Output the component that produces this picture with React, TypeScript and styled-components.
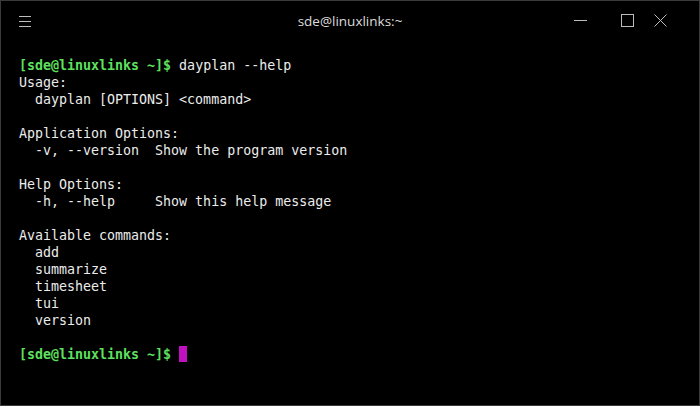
import React from "react";
import styled, { createGlobalStyle } from "styled-components";

const Global = createGlobalStyle`
  html, body { margin: 0; padding: 0; background: #000; }
  body { width: 700px; height: 406px; overflow: hidden; }
`;

const Window = styled.div`
  box-sizing: border-box;
  width: 700px;
  height: 406px;
  background: #000;
  border: 1px solid #3b3b3b;
  display: flex;
  flex-direction: column;
`;

const TitleBar = styled.div`
  height: 39px;
  display: grid;
  grid-template-columns: 160px 1fr 160px;
  align-items: center;
  font-family: "Open Sans", "Noto Sans", sans-serif;
  color: #dcdcdc;
`;

const MenuButton = styled.div`
  padding-left: 17px;
  display: flex;
  align-items: center;
  height: 100%;
`;

const Title = styled.div`
  text-align: center;
  font-size: 13.5px;
  padding-top: 1px;
`;

const Controls = styled.div`
  display: flex;
  justify-content: flex-end;
  align-items: center;
  padding-right: 32px;
`;

const ControlIcon = styled.svg<{ $gap: number }>`
  display: block;
  margin-left: ${(p) => p.$gap}px;
`;

const Terminal = styled.pre`
  margin: 0;
  padding: 17px 0 0 18px;
  font-family: "DejaVu Sans Mono", monospace;
  font-size: 13.3px;
  line-height: 17px;
  color: #ececec;
  white-space: pre;
`;

const Prompt = styled.span`
  color: #5fe05f;
  font-weight: bold;
`;

const Cursor = styled.span`
  display: inline-block;
  width: 8px;
  height: 16px;
  background: #c010c0;
  vertical-align: -3px;
`;

const icon = { stroke: "#bdbdbd", strokeWidth: 1, fill: "none" } as const;

export default function App() {
  return (
    <>
      <Global />
      <Window>
        <TitleBar>
          <MenuButton>
            <svg width="14" height="12" viewBox="0 0 14 12">
              <path d="M1 1.5h12M1 6.5h12M1 11.5h12" {...icon} />
            </svg>
          </MenuButton>
          <Title>sde@linuxlinks:~</Title>
          <Controls>
            <ControlIcon $gap={0} width="13" height="13" viewBox="0 0 13 13">
              <path d="M0 6.5h13" {...icon} />
            </ControlIcon>
            <ControlIcon $gap={34} width="13" height="13" viewBox="0 0 13 13">
              <rect x="0.5" y="0.5" width="12" height="12" {...icon} />
            </ControlIcon>
            <ControlIcon $gap={20} width="13" height="13" viewBox="0 0 13 13">
              <path d="M0.5 0.5l12 12M12.5 0.5l-12 12" {...icon} />
            </ControlIcon>
          </Controls>
        </TitleBar>
        <Terminal>
          <Prompt>[sde@linuxlinks ~]$</Prompt>{" dayplan --help\n"}
          {"Usage:\n"}
          {"  dayplan [OPTIONS] <command>\n"}
          {"\n"}
          {"Application Options:\n"}
          {"  -v, --version  Show the program version\n"}
          {"\n"}
          {"Help Options:\n"}
          {"  -h, --help     Show this help message\n"}
          {"\n"}
          {"Available commands:\n"}
          {"  add\n"}
          {"  summarize\n"}
          {"  timesheet\n"}
          {"  tui\n"}
          {"  version\n"}
          {"\n"}
          <Prompt>[sde@linuxlinks ~]$</Prompt>{" "}<Cursor />
        </Terminal>
      </Window>
    </>
  );
}
